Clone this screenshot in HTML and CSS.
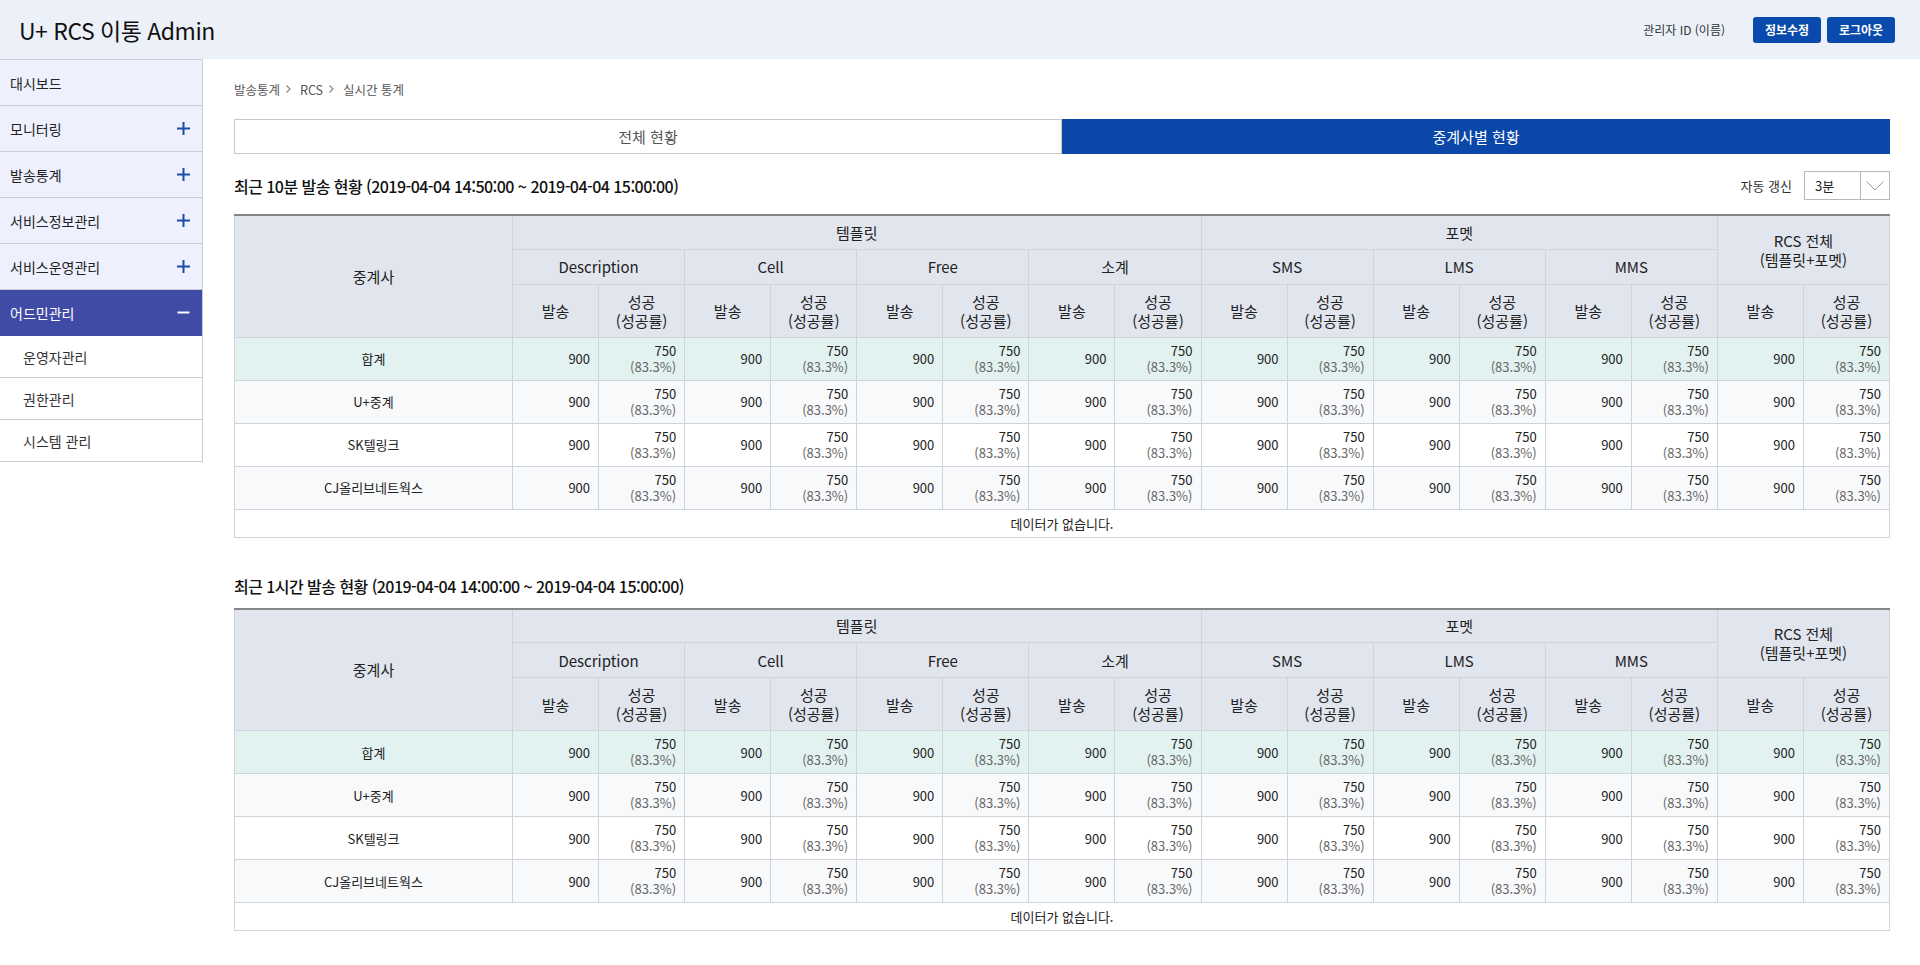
FILE: index.html
```html
<!DOCTYPE html>
<html lang="ko">
<head>
<meta charset="utf-8">
<title>U+ RCS 이통 Admin</title>
<link rel="stylesheet" href="styles.css">
</head>
<body>
<header class="top">
  <h1 class="logo">U+ RCS 이통 Admin</h1>
  <div class="user">
    <span class="user-name">관리자 ID (이름)</span>
    <button class="btn">정보수정</button>
    <button class="btn">로그아웃</button>
  </div>
</header>
<div class="layout">
  <nav class="side">
    <div class="menu">대시보드</div>
    <div class="menu">모니터링<svg class="ico" width="13" height="13" viewBox="0 0 13 13"><path d="M0 6.5H13M6.5 0V13" stroke="#1a4ea6" stroke-width="2"/></svg></div>
    <div class="menu">발송통계<svg class="ico" width="13" height="13" viewBox="0 0 13 13"><path d="M0 6.5H13M6.5 0V13" stroke="#1a4ea6" stroke-width="2"/></svg></div>
    <div class="menu">서비스정보관리<svg class="ico" width="13" height="13" viewBox="0 0 13 13"><path d="M0 6.5H13M6.5 0V13" stroke="#1a4ea6" stroke-width="2"/></svg></div>
    <div class="menu">서비스운영관리<svg class="ico" width="13" height="13" viewBox="0 0 13 13"><path d="M0 6.5H13M6.5 0V13" stroke="#1a4ea6" stroke-width="2"/></svg></div>
    <div class="menu active">어드민관리<svg class="ico" width="13" height="13" viewBox="0 0 13 13"><path d="M0.5 6.5H12.5" stroke="#ffffff" stroke-width="2"/></svg></div>
    <div class="sub">운영자관리</div>
    <div class="sub">권한관리</div>
    <div class="sub">시스템 관리</div>
  </nav>
  <main class="main">
    <div class="crumb">
      <span>발송통계</span>
      <svg class="chev" width="5" height="8" viewBox="0 0 5 8"><path d="M0.5 0.5L4 4L0.5 7.5" fill="none" stroke="#888" stroke-width="1.2"/></svg>
      <span>RCS</span>
      <svg class="chev" width="5" height="8" viewBox="0 0 5 8"><path d="M0.5 0.5L4 4L0.5 7.5" fill="none" stroke="#888" stroke-width="1.2"/></svg>
      <span>실시간 통계</span>
    </div>
    <div class="tabs">
      <div class="tab">전체 현황</div>
      <div class="tab on">중계사별 현황</div>
    </div>

    <div class="sec-head">
      <h2 class="sec-title">최근 10분 발송 현황 (2019-04-04 14:50:00 ~ 2019-04-04 15:00:00)</h2>
      <div class="refresh">
        <span class="refresh-label">자동 갱신</span>
        <div class="select">
          <span class="select-val">3분</span>
          <span class="select-arrow"><svg width="18" height="10" viewBox="0 0 18 10"><path d="M0.5 0.5L9 9L17.5 0.5" fill="none" stroke="#9a9a9a" stroke-width="1"/></svg></span>
        </div>
      </div>
    </div>
    <table class="grid">
      <colgroup><col class="c-name"><col span="16"></colgroup>
      <thead>
        <tr class="h1"><th rowspan="3">중계사</th><th colspan="8">템플릿</th><th colspan="6">포멧</th><th colspan="2" rowspan="2">RCS 전체<br>(템플릿+포멧)</th></tr>
        <tr class="h2"><th colspan="2">Description</th><th colspan="2">Cell</th><th colspan="2">Free</th><th colspan="2">소계</th><th colspan="2">SMS</th><th colspan="2">LMS</th><th colspan="2">MMS</th></tr>
        <tr class="h3"><th>발송</th><th>성공<br>(성공률)</th><th>발송</th><th>성공<br>(성공률)</th><th>발송</th><th>성공<br>(성공률)</th><th>발송</th><th>성공<br>(성공률)</th><th>발송</th><th>성공<br>(성공률)</th><th>발송</th><th>성공<br>(성공률)</th><th>발송</th><th>성공<br>(성공률)</th><th>발송</th><th>성공<br>(성공률)</th></tr>
      </thead>
      <tbody>
        <tr class="row sum"><td class="name">합계</td><td class="n">900</td><td class="s"><span class="v">750</span><span class="p">(83.3%)</span></td><td class="n">900</td><td class="s"><span class="v">750</span><span class="p">(83.3%)</span></td><td class="n">900</td><td class="s"><span class="v">750</span><span class="p">(83.3%)</span></td><td class="n">900</td><td class="s"><span class="v">750</span><span class="p">(83.3%)</span></td><td class="n">900</td><td class="s"><span class="v">750</span><span class="p">(83.3%)</span></td><td class="n">900</td><td class="s"><span class="v">750</span><span class="p">(83.3%)</span></td><td class="n">900</td><td class="s"><span class="v">750</span><span class="p">(83.3%)</span></td><td class="n">900</td><td class="s"><span class="v">750</span><span class="p">(83.3%)</span></td></tr>
        <tr class="row alt"><td class="name">U+중계</td><td class="n">900</td><td class="s"><span class="v">750</span><span class="p">(83.3%)</span></td><td class="n">900</td><td class="s"><span class="v">750</span><span class="p">(83.3%)</span></td><td class="n">900</td><td class="s"><span class="v">750</span><span class="p">(83.3%)</span></td><td class="n">900</td><td class="s"><span class="v">750</span><span class="p">(83.3%)</span></td><td class="n">900</td><td class="s"><span class="v">750</span><span class="p">(83.3%)</span></td><td class="n">900</td><td class="s"><span class="v">750</span><span class="p">(83.3%)</span></td><td class="n">900</td><td class="s"><span class="v">750</span><span class="p">(83.3%)</span></td><td class="n">900</td><td class="s"><span class="v">750</span><span class="p">(83.3%)</span></td></tr>
        <tr class="row"><td class="name">SK텔링크</td><td class="n">900</td><td class="s"><span class="v">750</span><span class="p">(83.3%)</span></td><td class="n">900</td><td class="s"><span class="v">750</span><span class="p">(83.3%)</span></td><td class="n">900</td><td class="s"><span class="v">750</span><span class="p">(83.3%)</span></td><td class="n">900</td><td class="s"><span class="v">750</span><span class="p">(83.3%)</span></td><td class="n">900</td><td class="s"><span class="v">750</span><span class="p">(83.3%)</span></td><td class="n">900</td><td class="s"><span class="v">750</span><span class="p">(83.3%)</span></td><td class="n">900</td><td class="s"><span class="v">750</span><span class="p">(83.3%)</span></td><td class="n">900</td><td class="s"><span class="v">750</span><span class="p">(83.3%)</span></td></tr>
        <tr class="row alt"><td class="name">CJ올리브네트웍스</td><td class="n">900</td><td class="s"><span class="v">750</span><span class="p">(83.3%)</span></td><td class="n">900</td><td class="s"><span class="v">750</span><span class="p">(83.3%)</span></td><td class="n">900</td><td class="s"><span class="v">750</span><span class="p">(83.3%)</span></td><td class="n">900</td><td class="s"><span class="v">750</span><span class="p">(83.3%)</span></td><td class="n">900</td><td class="s"><span class="v">750</span><span class="p">(83.3%)</span></td><td class="n">900</td><td class="s"><span class="v">750</span><span class="p">(83.3%)</span></td><td class="n">900</td><td class="s"><span class="v">750</span><span class="p">(83.3%)</span></td><td class="n">900</td><td class="s"><span class="v">750</span><span class="p">(83.3%)</span></td></tr>
        <tr class="empty"><td colspan="17">데이터가 없습니다.</td></tr>
      </tbody>
    </table>

    <div class="sec-head plain">
      <h2 class="sec-title">최근 1시간 발송 현황 (2019-04-04 14:00:00 ~ 2019-04-04 15:00:00)</h2>
    </div>
    <table class="grid">
      <colgroup><col class="c-name"><col span="16"></colgroup>
      <thead>
        <tr class="h1"><th rowspan="3">중계사</th><th colspan="8">템플릿</th><th colspan="6">포멧</th><th colspan="2" rowspan="2">RCS 전체<br>(템플릿+포멧)</th></tr>
        <tr class="h2"><th colspan="2">Description</th><th colspan="2">Cell</th><th colspan="2">Free</th><th colspan="2">소계</th><th colspan="2">SMS</th><th colspan="2">LMS</th><th colspan="2">MMS</th></tr>
        <tr class="h3"><th>발송</th><th>성공<br>(성공률)</th><th>발송</th><th>성공<br>(성공률)</th><th>발송</th><th>성공<br>(성공률)</th><th>발송</th><th>성공<br>(성공률)</th><th>발송</th><th>성공<br>(성공률)</th><th>발송</th><th>성공<br>(성공률)</th><th>발송</th><th>성공<br>(성공률)</th><th>발송</th><th>성공<br>(성공률)</th></tr>
      </thead>
      <tbody>
        <tr class="row sum"><td class="name">합계</td><td class="n">900</td><td class="s"><span class="v">750</span><span class="p">(83.3%)</span></td><td class="n">900</td><td class="s"><span class="v">750</span><span class="p">(83.3%)</span></td><td class="n">900</td><td class="s"><span class="v">750</span><span class="p">(83.3%)</span></td><td class="n">900</td><td class="s"><span class="v">750</span><span class="p">(83.3%)</span></td><td class="n">900</td><td class="s"><span class="v">750</span><span class="p">(83.3%)</span></td><td class="n">900</td><td class="s"><span class="v">750</span><span class="p">(83.3%)</span></td><td class="n">900</td><td class="s"><span class="v">750</span><span class="p">(83.3%)</span></td><td class="n">900</td><td class="s"><span class="v">750</span><span class="p">(83.3%)</span></td></tr>
        <tr class="row alt"><td class="name">U+중계</td><td class="n">900</td><td class="s"><span class="v">750</span><span class="p">(83.3%)</span></td><td class="n">900</td><td class="s"><span class="v">750</span><span class="p">(83.3%)</span></td><td class="n">900</td><td class="s"><span class="v">750</span><span class="p">(83.3%)</span></td><td class="n">900</td><td class="s"><span class="v">750</span><span class="p">(83.3%)</span></td><td class="n">900</td><td class="s"><span class="v">750</span><span class="p">(83.3%)</span></td><td class="n">900</td><td class="s"><span class="v">750</span><span class="p">(83.3%)</span></td><td class="n">900</td><td class="s"><span class="v">750</span><span class="p">(83.3%)</span></td><td class="n">900</td><td class="s"><span class="v">750</span><span class="p">(83.3%)</span></td></tr>
        <tr class="row"><td class="name">SK텔링크</td><td class="n">900</td><td class="s"><span class="v">750</span><span class="p">(83.3%)</span></td><td class="n">900</td><td class="s"><span class="v">750</span><span class="p">(83.3%)</span></td><td class="n">900</td><td class="s"><span class="v">750</span><span class="p">(83.3%)</span></td><td class="n">900</td><td class="s"><span class="v">750</span><span class="p">(83.3%)</span></td><td class="n">900</td><td class="s"><span class="v">750</span><span class="p">(83.3%)</span></td><td class="n">900</td><td class="s"><span class="v">750</span><span class="p">(83.3%)</span></td><td class="n">900</td><td class="s"><span class="v">750</span><span class="p">(83.3%)</span></td><td class="n">900</td><td class="s"><span class="v">750</span><span class="p">(83.3%)</span></td></tr>
        <tr class="row alt"><td class="name">CJ올리브네트웍스</td><td class="n">900</td><td class="s"><span class="v">750</span><span class="p">(83.3%)</span></td><td class="n">900</td><td class="s"><span class="v">750</span><span class="p">(83.3%)</span></td><td class="n">900</td><td class="s"><span class="v">750</span><span class="p">(83.3%)</span></td><td class="n">900</td><td class="s"><span class="v">750</span><span class="p">(83.3%)</span></td><td class="n">900</td><td class="s"><span class="v">750</span><span class="p">(83.3%)</span></td><td class="n">900</td><td class="s"><span class="v">750</span><span class="p">(83.3%)</span></td><td class="n">900</td><td class="s"><span class="v">750</span><span class="p">(83.3%)</span></td><td class="n">900</td><td class="s"><span class="v">750</span><span class="p">(83.3%)</span></td></tr>
        <tr class="empty"><td colspan="17">데이터가 없습니다.</td></tr>
      </tbody>
    </table>
  </main>
</div>
</body>
</html>
```

FILE: styles.css
```css
* { box-sizing: border-box; }

html, body {
  margin: 0;
  padding: 0;
  background: #ffffff;
}

body {
  font-family: "Noto Sans CJK KR", "Noto Sans", sans-serif;
  color: #222222;
  font-size: 13px;
}

/* Header */
.top {
  height: 59px;
  background: #ecf0f8;
  display: flex;
  align-items: center;
  justify-content: space-between;
  padding: 0 25px 0 19px;
}

.logo {
  margin: 0;
  font-size: 23px;
  font-weight: 400;
  color: #111111;
  letter-spacing: -0.5px;
}

.user {
  display: flex;
  align-items: center;
}

.user-name {
  font-size: 12px;
  color: #333333;
  margin-right: 22px;
}

.btn {
  width: 68px;
  height: 26px;
  margin-left: 6px;
  border: 0;
  border-radius: 3px;
  background: #0b4aad;
  color: #ffffff;
  font-family: "Noto Sans CJK KR", "Noto Sans", sans-serif;
  font-size: 12px;
  font-weight: 700;
  padding: 0;
}

/* Layout */
.layout {
  display: flex;
  align-items: flex-start;
}

.side {
  width: 203px;
  flex: none;
  border-top: 1px solid #c9cdd6;
  border-right: 1px solid #c9cdd6;
}

.menu {
  height: 46px;
  display: flex;
  align-items: center;
  justify-content: space-between;
  padding: 0 12px 0 10px;
  background: #eef1fd;
  border-bottom: 1px solid #c9cdd6;
  font-size: 14px;
  color: #222222;
}

.menu.active {
  background: #3f4ba5;
  color: #ffffff;
  border-bottom-color: #3f4ba5;
}

.sub {
  height: 42px;
  display: flex;
  align-items: center;
  padding-left: 23px;
  background: #ffffff;
  border-bottom: 1px solid #c9cdd6;
  font-size: 14px;
  color: #333333;
}

.ico { display: block; }

/* Main */
.main {
  flex: 1;
  min-width: 0;
  padding: 0 30px 40px 31px;
}

.crumb {
  margin-top: 21px;
  height: 18px;
  display: flex;
  align-items: center;
  font-size: 12.5px;
  color: #555555;
}

.chev {
  display: block;
  margin: 0 9px 0 6px;
}

.tabs {
  display: flex;
  margin-top: 21px;
  height: 35px;
}

.tab {
  flex: 1;
  display: flex;
  align-items: center;
  justify-content: center;
  border: 1px solid #c8c8c8;
  font-size: 15px;
  color: #555555;
}

.tab.on {
  background: #0b47a8;
  border-color: #0b47a8;
  color: #ffffff;
}

.sec-head {
  display: flex;
  align-items: center;
  justify-content: space-between;
  height: 29px;
  margin-top: 17px;
  margin-bottom: 14px;
}

.sec-head.plain {
  margin-top: 34px;
  margin-bottom: 7px;
}

.sec-title {
  margin: 0;
  font-size: 16px;
  font-weight: 500;
  color: #111111;
  letter-spacing: -0.55px;
}

.refresh {
  display: flex;
  align-items: center;
}

.refresh-label {
  font-size: 13px;
  color: #333333;
  margin-right: 12px;
}

.select {
  width: 86px;
  height: 29px;
  border: 1px solid #b9b9b9;
  display: flex;
  align-items: stretch;
  background: #ffffff;
}

.select-val {
  flex: 1;
  display: flex;
  align-items: center;
  padding-left: 10px;
  font-size: 13px;
  color: #222222;
}

.select-arrow {
  width: 29px;
  border-left: 1px solid #b9b9b9;
  display: flex;
  align-items: center;
  justify-content: center;
}

/* Table */
.grid {
  width: 100%;
  table-layout: fixed;
  border-collapse: collapse;
  border-top: 2px solid #858585;
}

.c-name { width: 278px; }

.grid th,
.grid td {
  border: 1px solid #cfd3da;
  padding: 0;
}

.grid tr:first-child th { border-top: 2px solid #858585; }

.grid th {
  background: #e1e5ee;
  font-size: 15px;
  font-weight: 400;
  color: #222222;
  line-height: 19px;
  text-align: center;
}

.h1 { height: 34px; }
.h2 { height: 35px; }
.h3 { height: 53px; }

.row { height: 43px; background: #ffffff; }
.row.alt { background: #f8f9fb; }
.row.sum { background: #e2f2f0; }

.grid td {
  font-size: 13px;
  color: #222222;
  vertical-align: middle;
}

.grid td.name {
  text-align: center;
}

.grid td.n,
.grid td.s {
  text-align: right;
  padding-right: 8px;
}

.v, .p {
  display: block;
  line-height: 16px;
}

.p { color: #666666; }

.empty { height: 28px; }

.empty td {
  text-align: center;
  font-size: 13px;
  background: #ffffff;
}
```
